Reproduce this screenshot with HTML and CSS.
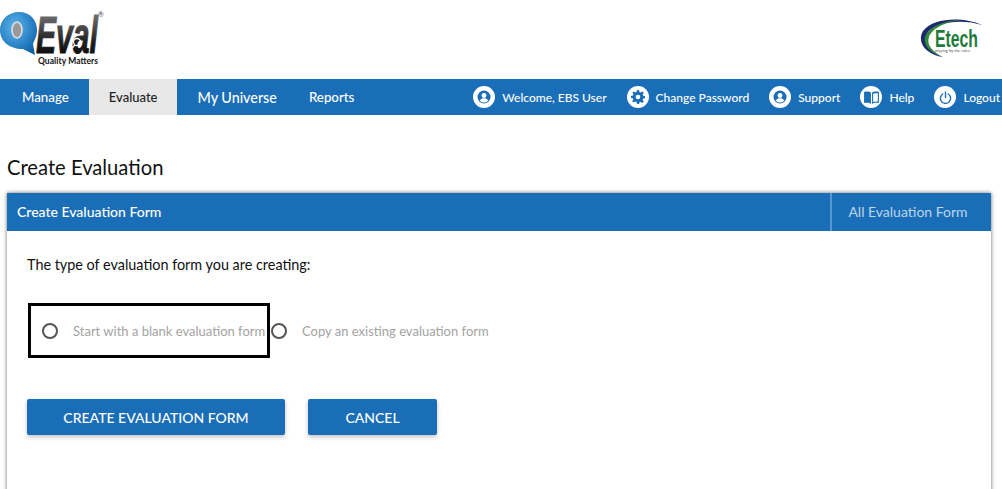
FILE: index.html
```html
<!DOCTYPE html>
<html lang="en">

<head>
    <meta charset="UTF-8">
    <meta name="viewport" content="width=device-width, initial-scale=1.0">
    <title>Create Evaluation</title>
    <link rel="stylesheet" href="styles.css">
</head>

<body>
    <!-- Logos -->
    <header class="top">
        <svg class="logo-qeval" width="110" height="79" viewBox="0 0 110 79">
            <defs>
                <linearGradient id="evalGrad" x1="0" y1="0" x2="0" y2="1">
                    <stop offset="0" stop-color="#8a8a8a"/>
                    <stop offset="0.6" stop-color="#222"/>
                    <stop offset="1" stop-color="#000"/>
                </linearGradient>
                <radialGradient id="bubbleGrad" cx="0.4" cy="0.35" r="0.75">
                    <stop offset="0" stop-color="#5cb6ee"/>
                    <stop offset="1" stop-color="#0b5fa8"/>
                </radialGradient>
            </defs>
            <text class="logo-eval" x="36" y="53" textLength="62" lengthAdjust="spacingAndGlyphs" fill="url(#evalGrad)" stroke="url(#evalGrad)">Eval</text>
            <path d="M19 12c11 0 18 8 18 18 0 7-3 11-4 14l2 11-12-6C9 49 0 41 0 30c0-10 8-18 19-18z" fill="url(#bubbleGrad)"/>
            <ellipse cx="17" cy="30" rx="5" ry="8" fill="#9a9a9a" stroke="#e4e4e4" stroke-width="1.5"/>
            <circle cx="77" cy="42" r="3.5" fill="none" stroke="#fff" stroke-width="1.3"/>
            <path d="M75 45l-5 5" stroke="#fff" stroke-width="1.5"/>
            <text class="logo-reg" x="98" y="17">®</text>
            <text class="logo-tag" x="38" y="64" textLength="60">Quality Matters</text>
        </svg>
        <svg class="logo-etech" width="64" height="44" viewBox="0 0 64 44">
            <path d="M63 8C45 0 15 0 4 14-3 26 8 38 24 40 10 35 3 26 9 15 18 4 45 2 63 8z" fill="#1d2a6b"/>
            <path d="M44 3C25 3 10 10 6 20 4 29 12 36 24 40 14 35 7 28 10 20 13 11 28 4 44 3z" fill="#2f8a3c"/>
            <text class="logo-etech-name" x="16" y="30" textLength="43" lengthAdjust="spacingAndGlyphs">Etech</text>
            <text class="logo-etech-tag" x="16" y="35" textLength="35" lengthAdjust="spacingAndGlyphs">playing by the rules</text>
        </svg>
    </header>

    <!-- Navigation -->
    <nav class="nav">
        <div class="nav-tabs">
            <a class="nav-tab tab-manage">Manage</a>
            <a class="nav-tab tab-evaluate active">Evaluate</a>
            <a class="nav-tab tab-universe">My Universe</a>
            <a class="nav-tab">Reports</a>
        </div>
        <div class="nav-links">
            <a class="nav-link">
                <span class="nav-icon">
                    <svg width="14" height="14" viewBox="0 0 14 14"><circle cx="7" cy="7" r="6.5" fill="#1a6eb7"/><circle cx="7" cy="5.5" r="2.4" fill="#fff"/><path d="M2.8 10.5c1-1.6 2.5-2.2 4.2-2.2s3.2.6 4.2 2.2C10 12 8.500 12.6 7 12.6S4 12 2.800 10.500z" fill="#fff"/></svg>
                </span>
                Welcome, EBS User
            </a>
            <a class="nav-link">
                <span class="nav-icon">
                    <svg width="14" height="14" viewBox="0 0 14 14"><path d="M6 0h2l.4 2 1.300.5 1.700-1.100 1.400 1.400-1.100 1.700.5 1.300 2 .4v2l-2 .4-.5 1.300 1.100 1.700-1.400 1.400-1.700-1.100-1.300.5L8 14H6l-.4-2-1.300-.5-1.700 1.100-1.400-1.400 1.100-1.700-.5-1.300L0 8V6l2-.4.5-1.300-1.100-1.500 1.400-1.400 1.700 1.100L5.600 2z" fill="#1a6eb7"/><circle cx="7" cy="7" r="2.3" fill="#fff"/></svg>
                </span>
                Change Password
            </a>
            <a class="nav-link">
                <span class="nav-icon">
                    <svg width="14" height="14" viewBox="0 0 14 14"><circle cx="7" cy="7" r="6.5" fill="#1a6eb7"/><circle cx="7" cy="5.5" r="2.4" fill="#fff"/><path d="M2.8 10.5c1-1.6 2.5-2.2 4.2-2.2s3.2.6 4.2 2.2C10 12 8.500 12.6 7 12.6S4 12 2.800 10.500z" fill="#fff"/></svg>
                </span>
                Support
            </a>
            <a class="nav-link">
                <span class="nav-icon">
                    <svg width="15" height="13" viewBox="0 0 16 14"><path d="M0 1c3-.8 6-.6 7.400 1v12C6 12.600 3 12.400 0 13z" fill="#1a6eb7"/><path d="M16 1c-3-.8-6-.6-7.400 1v12c1.400-1.400 4.400-1.600 7.400-1z" fill="#1a6eb7"/><path d="M9.800 3c1.400-.7 3.100-.8 5-.6v9c-1.900-.2-3.600-.1-5 .5z" fill="#fff"/></svg>
                </span>
                Help
            </a>
            <a class="nav-link">
                <span class="nav-icon">
                    <svg width="13" height="13" viewBox="0 0 14 14"><path d="M4 3.200a5.500 5.500 0 1 0 6 0" fill="none" stroke="#1a6eb7" stroke-width="1.500" stroke-linecap="round"/><path d="M7 1v6" stroke="#1a6eb7" stroke-width="1.500" stroke-linecap="round"/></svg>
                </span>
                Logout
            </a>
        </div>
    </nav>

    <main class="page">
        <h1>Create Evaluation</h1>

        <section class="panel">
            <div class="panel-header">
                <div class="panel-title">Create Evaluation Form</div>
                <div class="panel-side">All Evaluation Form</div>
            </div>
            <div class="panel-body">
                <p class="question">The type of evaluation form you are creating:</p>

                <div class="options">
                    <label class="option focused"><span class="radio"></span>Start with a blank evaluation form</label>
                    <label class="option"><span class="radio"></span>Copy an existing evaluation form</label>
                </div>

                <div class="actions">
                    <button class="btn btn-create">CREATE EVALUATION FORM</button>
                    <button class="btn btn-cancel">CANCEL</button>
                </div>
            </div>
        </section>
    </main>
</body>

</html>
```

FILE: styles.css
```css
html, body {
    height: 489px;
    overflow: hidden;
}

body {
    margin: 0;
    background-color: white;
    font-family: Lato, "Open Sans", sans-serif;
    color: #111;
}

.top {
    display: flex;
    justify-content: space-between;
    height: 79px;
}

.logo-eval {
    font-family: "Liberation Sans", sans-serif;
    font-size: 52px;
    font-weight: bold;
    font-style: italic;
    stroke-width: 1px;
}

.logo-reg {
    font-size: 7px;
    fill: #444;
}

.logo-tag {
    font-size: 8.5px;
    font-weight: bold;
    fill: #111;
}

.logo-etech {
    margin: 17px 19px 0 0;
}

.logo-etech-name {
    font-family: "Liberation Sans", sans-serif;
    font-size: 24px;
    font-weight: bold;
    fill: #1e7a3a;
}

.logo-etech-tag {
    font-size: 4px;
    fill: #555;
}

.nav {
    display: flex;
    justify-content: space-between;
    height: 36px;
    background-color: #1a6eb7;
    color: white;
}

.nav-tabs {
    display: flex;
    font-size: 13.3px;
}

.nav-tab {
    display: flex;
    align-items: center;
    padding: 0 20px;
    font-weight: 500;
}

.tab-manage {
    padding-left: 22px;
}

.tab-evaluate {
    font-size: 13px;
}

.tab-universe {
    padding-right: 12px;
    font-size: 14.3px;
}

.nav-tab.active {
    background-color: #e8e8e8;
    color: #222;
}

.nav-links {
    display: flex;
    align-items: center;
    gap: 20px;
    margin-right: 2px;
    font-size: 12px;
    font-weight: 500;
}

.nav-link {
    display: flex;
    align-items: center;
    gap: 7px;
}

.nav-icon {
    display: flex;
    align-items: center;
    justify-content: center;
    width: 22px;
    height: 22px;
    border-radius: 50%;
    background-color: white;
}

.page {
    padding: 41px 11px 0 7px;
}

h1 {
    margin: 0 0 15px;
    font-size: 20.2px;
    line-height: 22px;
    font-weight: 400;
}

.panel {
    height: 320px;
    background-color: white;
    box-shadow: 0 0 4px rgba(0, 0, 0, 0.6);
}

.panel-header {
    display: flex;
    justify-content: space-between;
    height: 38px;
    background-color: #1a6eb7;
    color: white;
    font-size: 14px;
    line-height: 38px;
}

.panel-title {
    padding-left: 10px;
    font-weight: 500;
}

.panel-side {
    box-sizing: border-box;
    width: 161px;
    padding-right: 7px;
    border-left: 2px solid #5a97cc;
    text-align: center;
    color: #bcd5ea;
}

.panel-body {
    padding: 25px 20px 0;
}

.question {
    margin: 0 0 29px;
    font-size: 14.4px;
    line-height: 18px;
}

.options {
    display: flex;
    align-items: center;
    height: 55px;
}

.option {
    display: flex;
    align-items: center;
    gap: 15px;
    color: #a3a3a3;
    font-size: 13px;
}

.option.focused {
    box-sizing: border-box;
    width: 242px;
    height: 55px;
    margin: 0 1px;
    padding-left: 11px;
    border: 3px solid black;
    white-space: nowrap;
}

.radio {
    flex: none;
    box-sizing: border-box;
    width: 16px;
    height: 16px;
    border: 2px solid #555;
    border-radius: 50%;
}

.actions {
    display: flex;
    gap: 23px;
    margin-top: 41px;
}

.btn {
    height: 36px;
    padding: 0;
    background-color: #1a6eb7;
    color: white;
    border: none;
    border-radius: 2px;
    box-shadow: 0 2px 4px rgba(0, 0, 0, 0.25);
    font-family: Lato, sans-serif;
    font-size: 14px;
    font-weight: 500;
}

.btn-create {
    width: 258px;
}

.btn-cancel {
    width: 129px;
}
```
